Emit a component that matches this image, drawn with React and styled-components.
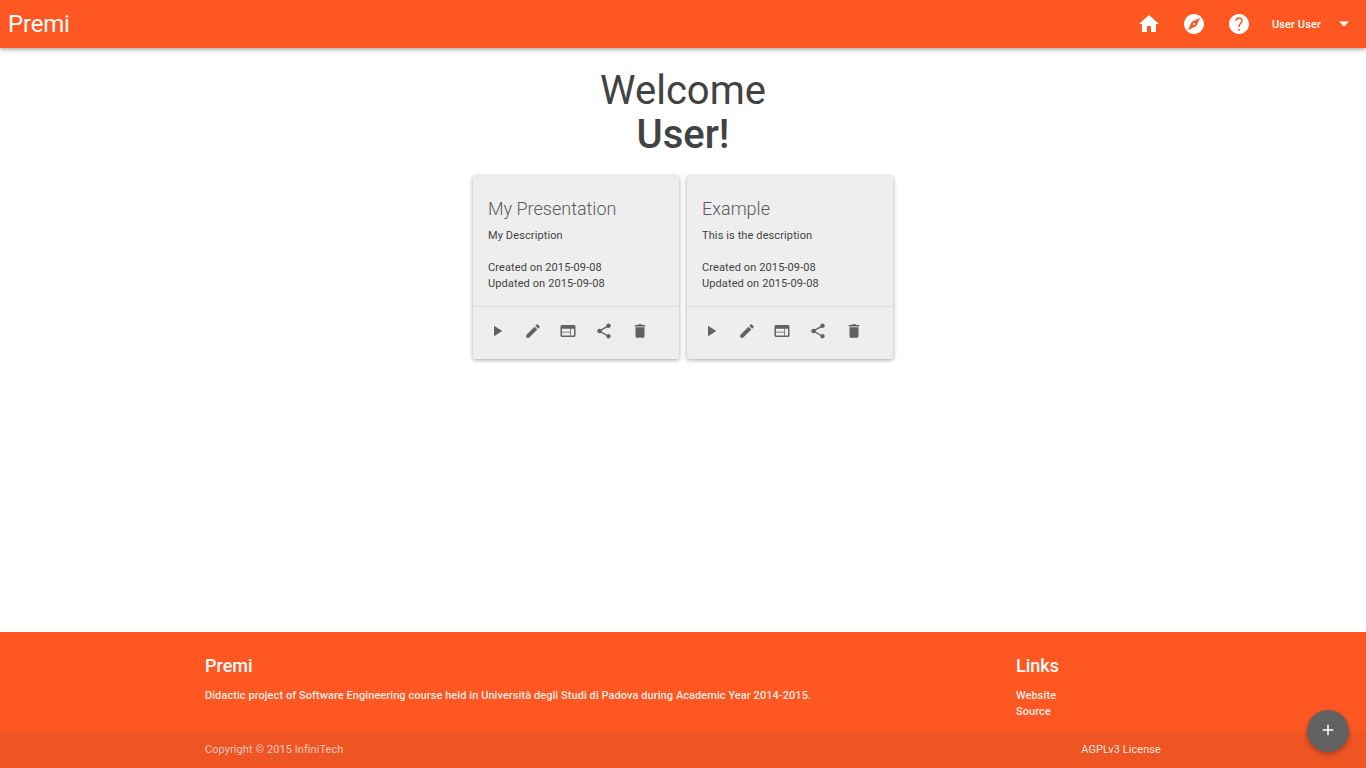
import React from 'react';
import styled, { createGlobalStyle } from 'styled-components';

const Global = createGlobalStyle`
  * { box-sizing: border-box; }
  body { margin: 0; background: #fff; font-family: Roboto, sans-serif; font-size: 11px; color: #424242; }
`;

const Page = styled.div`
  display: flex;
  flex-direction: column;
  height: 768px;
  overflow: hidden;
`;
const Toolbar = styled.header`
  display: flex;
  align-items: center;
  height: 48px;
  flex: none;
  padding: 0 16px 0 8px;
  background: #ff5722;
  color: #fff;
  box-shadow: 0 1px 5px rgba(0, 0, 0, 0.42);
`;
const Brand = styled.h1`
  margin: 0;
  flex: 1;
  font-size: 24px;
  font-weight: 400;
  letter-spacing: -0.2px;
  line-height: 48px;
`;
const Nav = styled.nav`
  display: flex;
  align-items: center;
  gap: 21px;
`;
const Icon = styled.svg`
  display: block;
  width: ${p => p.$size}px;
  height: ${p => p.$size}px;
  fill: currentColor;
`;
const UserMenu = styled.div`
  display: flex;
  align-items: center;
  justify-content: space-between;
  width: 78px;
  font-weight: 500;
  letter-spacing: 0.1px;
`;
const Main = styled.main`
  flex: 1;
  display: flex;
  flex-direction: column;
  align-items: center;
  padding-top: 21px;
`;
const Welcome = styled.h2`
  margin: 0;
  font-size: 40px;
  line-height: 44px;
  font-weight: 400;
  text-align: center;
`;
const UserName = styled.strong`
  display: block;
  font-weight: 500;
`;
const Cards = styled.div`
  display: flex;
  gap: 8px;
  margin-top: 19px;
`;
const Card = styled.article`
  width: 206px;
  height: 183px;
  background: #eee;
  border-radius: 2px;
  box-shadow: 0 1px 4px rgba(0, 0, 0, 0.37);
`;
const CardBody = styled.div`
  height: 131px;
  padding: 21px 15px 0;
  line-height: 16px;
  border-bottom: 1px solid #dcdcdc;
`;
const CardTitle = styled.h3`
  margin: 0 0 7px;
  color: #5b5b5b;
  font-size: 18px;
  font-weight: 300;
  line-height: 24px;
`;
const Text = styled.p`
  margin: 0 0 ${p => p.$gap || 0}px;
  letter-spacing: ${p => p.$spacing || 0.11}px;
`;
const Actions = styled.div`
  display: flex;
  gap: 17.7px;
  padding: 15px;
  color: #616161;
`;
const Footer = styled.footer`
  height: 136px;
  flex: none;
  background: #ff5722;
  color: #fff;
  font-weight: 500;
`;
const FooterTop = styled.div`
  display: flex;
  height: 99px;
  padding: 22px 205px 0;
  line-height: 16px;
  color: rgba(255, 255, 255, 0.9);
`;
const About = styled.section`
  width: 811px;
`;
const FooterTitle = styled.h4`
  margin: 0 0 10px;
  color: #fff;
  font-size: 18px;
  font-weight: 500;
  line-height: 24px;
`;
const FooterLink = styled.a`
  display: block;
  letter-spacing: 0.07px;
`;
const Copyright = styled.div`
  display: flex;
  justify-content: space-between;
  height: 37px;
  padding: 0 205px;
  line-height: 37px;
  font-weight: 400;
  letter-spacing: 0.07px;
  background: #ef5423;
  color: rgba(255, 255, 255, 0.7);
`;
const License = styled.a`
  color: rgba(255, 255, 255, 0.87);
`;
const AddButton = styled.button`
  position: fixed;
  right: 17px;
  bottom: 16px;
  display: grid;
  place-items: center;
  width: 42px;
  height: 42px;
  padding: 0 0 2px;
  border: 0;
  border-radius: 50%;
  background: #616161;
  color: #fff;
  box-shadow: 0 2px 5px rgba(0, 0, 0, 0.3);
`;

const paths = {
  home: 'M10 20v-6h4v6h5v-8h3L12 3 2 12h3v8z',
  explore: 'M12 10.9c-.61 0-1.1.49-1.1 1.1s.49 1.1 1.1 1.1c.61 0 1.1-.49 1.1-1.1s-.49-1.1-1.1-1.1zM12 2C6.48 2 2 6.48 2 12s4.48 10 10 10 10-4.48 10-10S17.52 2 12 2zm2.19 12.19L6 18l3.81-8.19L18 6l-3.81 8.19z',
  help: 'M12 2C6.48 2 2 6.48 2 12s4.48 10 10 10 10-4.48 10-10S17.52 2 12 2zm.8 16.8h-1.6v-1.7h1.6v1.7zm1.95-7.5l-.9.92C13.1 12.97 12.75 13.6 12.75 15h-1.5v-.5c0-1.1.4-2.1 1.1-2.8l1.24-1.26c.42-.42.66-.9.66-1.44 0-1.24-1-2.25-2.25-2.25S9.75 7.76 9.75 9h-1.5c0-2.07 1.68-3.75 3.75-3.75S15.75 6.93 15.75 9c0 .88-.4 1.7-1 2.3z',
  play: 'M8 5v14l11-7z',
  edit: 'M3 17.25V21h3.75L17.81 9.94l-3.75-3.75L3 17.25zM20.71 7.04c.39-.39.39-1.02 0-1.41l-2.34-2.34c-.39-.39-1.02-.39-1.41 0l-1.83 1.83 3.75 3.75 1.83-1.83z',
  web: 'M20 4H4c-1.1 0-1.99.9-1.99 2L2 18c0 1.1.9 2 2 2h16c1.1 0 2-.9 2-2V6c0-1.1-.9-2-2-2zm-5 14H4v-4h11v4zm0-5H4V9h11v4zm5 5h-4V9h4v9z',
  share: 'M18 16.08c-.76 0-1.44.3-1.96.77L8.91 12.7c.05-.23.09-.46.09-.7s-.04-.47-.09-.7l7.05-4.11c.54.5 1.25.81 2.04.81 1.66 0 3-1.34 3-3s-1.34-3-3-3-3 1.34-3 3c0 .24.04.47.09.7L8.04 9.81C7.5 9.31 6.79 9 6 9c-1.66 0-3 1.34-3 3s1.34 3 3 3c.79 0 1.5-.31 2.04-.81l7.12 4.16c-.05.21-.08.43-.08.65 0 1.61 1.31 2.92 2.92 2.92 1.61 0 2.92-1.31 2.92-2.92s-1.31-2.92-2.92-2.92z',
  trash: 'M6 19c0 1.1.9 2 2 2h8c1.1 0 2-.9 2-2V7H6v12zM19 4h-3.5l-1-1h-5l-1 1H5v2h14V4z',
  arrow: 'M2 7h20L12 17z',
  add: 'M19 13h-6v6h-2v-6H5v-2h6V5h2v6h6v2z',
};

const Glyph = ({ name, size }) => (
  <Icon viewBox="0 0 24 24" $size={size}><path d={paths[name]} /></Icon>
);

const presentations = [
  { title: 'My Presentation', description: 'My Description' },
  { title: 'Example', description: 'This is the description' },
];

export default function App() {
  return (
    <Page>
      <Global />
      <Toolbar>
        <Brand>Premi</Brand>
        <Nav>
          {['home', 'explore', 'help'].map(n => <Glyph key={n} name={n} size={24} />)}
          <UserMenu>User User<Glyph name="arrow" size={12} /></UserMenu>
        </Nav>
      </Toolbar>
      <Main>
        <Welcome>Welcome<UserName>User!</UserName></Welcome>
        <Cards>
          {presentations.map(p => (
            <Card key={p.title}>
              <CardBody>
                <CardTitle>{p.title}</CardTitle>
                <Text $gap={16}>{p.description}</Text>
                <Text>Created on 2015-09-08</Text>
                <Text>Updated on 2015-09-08</Text>
              </CardBody>
              <Actions>
                {['play', 'edit', 'web', 'share', 'trash'].map(n => <Glyph key={n} name={n} size={18} />)}
              </Actions>
            </Card>
          ))}
        </Cards>
      </Main>
      <Footer>
        <FooterTop>
          <About>
            <FooterTitle>Premi</FooterTitle>
            <Text $spacing={0.068}>Didactic project of Software Engineering course held in Università degli Studi di Padova during Academic Year 2014-2015.</Text>
          </About>
          <section>
            <FooterTitle>Links</FooterTitle>
            <FooterLink>Website</FooterLink>
            <FooterLink>Source</FooterLink>
          </section>
        </FooterTop>
        <Copyright><span>Copyright © 2015 InfiniTech</span><License>AGPLv3 License</License></Copyright>
      </Footer>
      <AddButton aria-label="Add"><Glyph name="add" size={18} /></AddButton>
    </Page>
  );
}
